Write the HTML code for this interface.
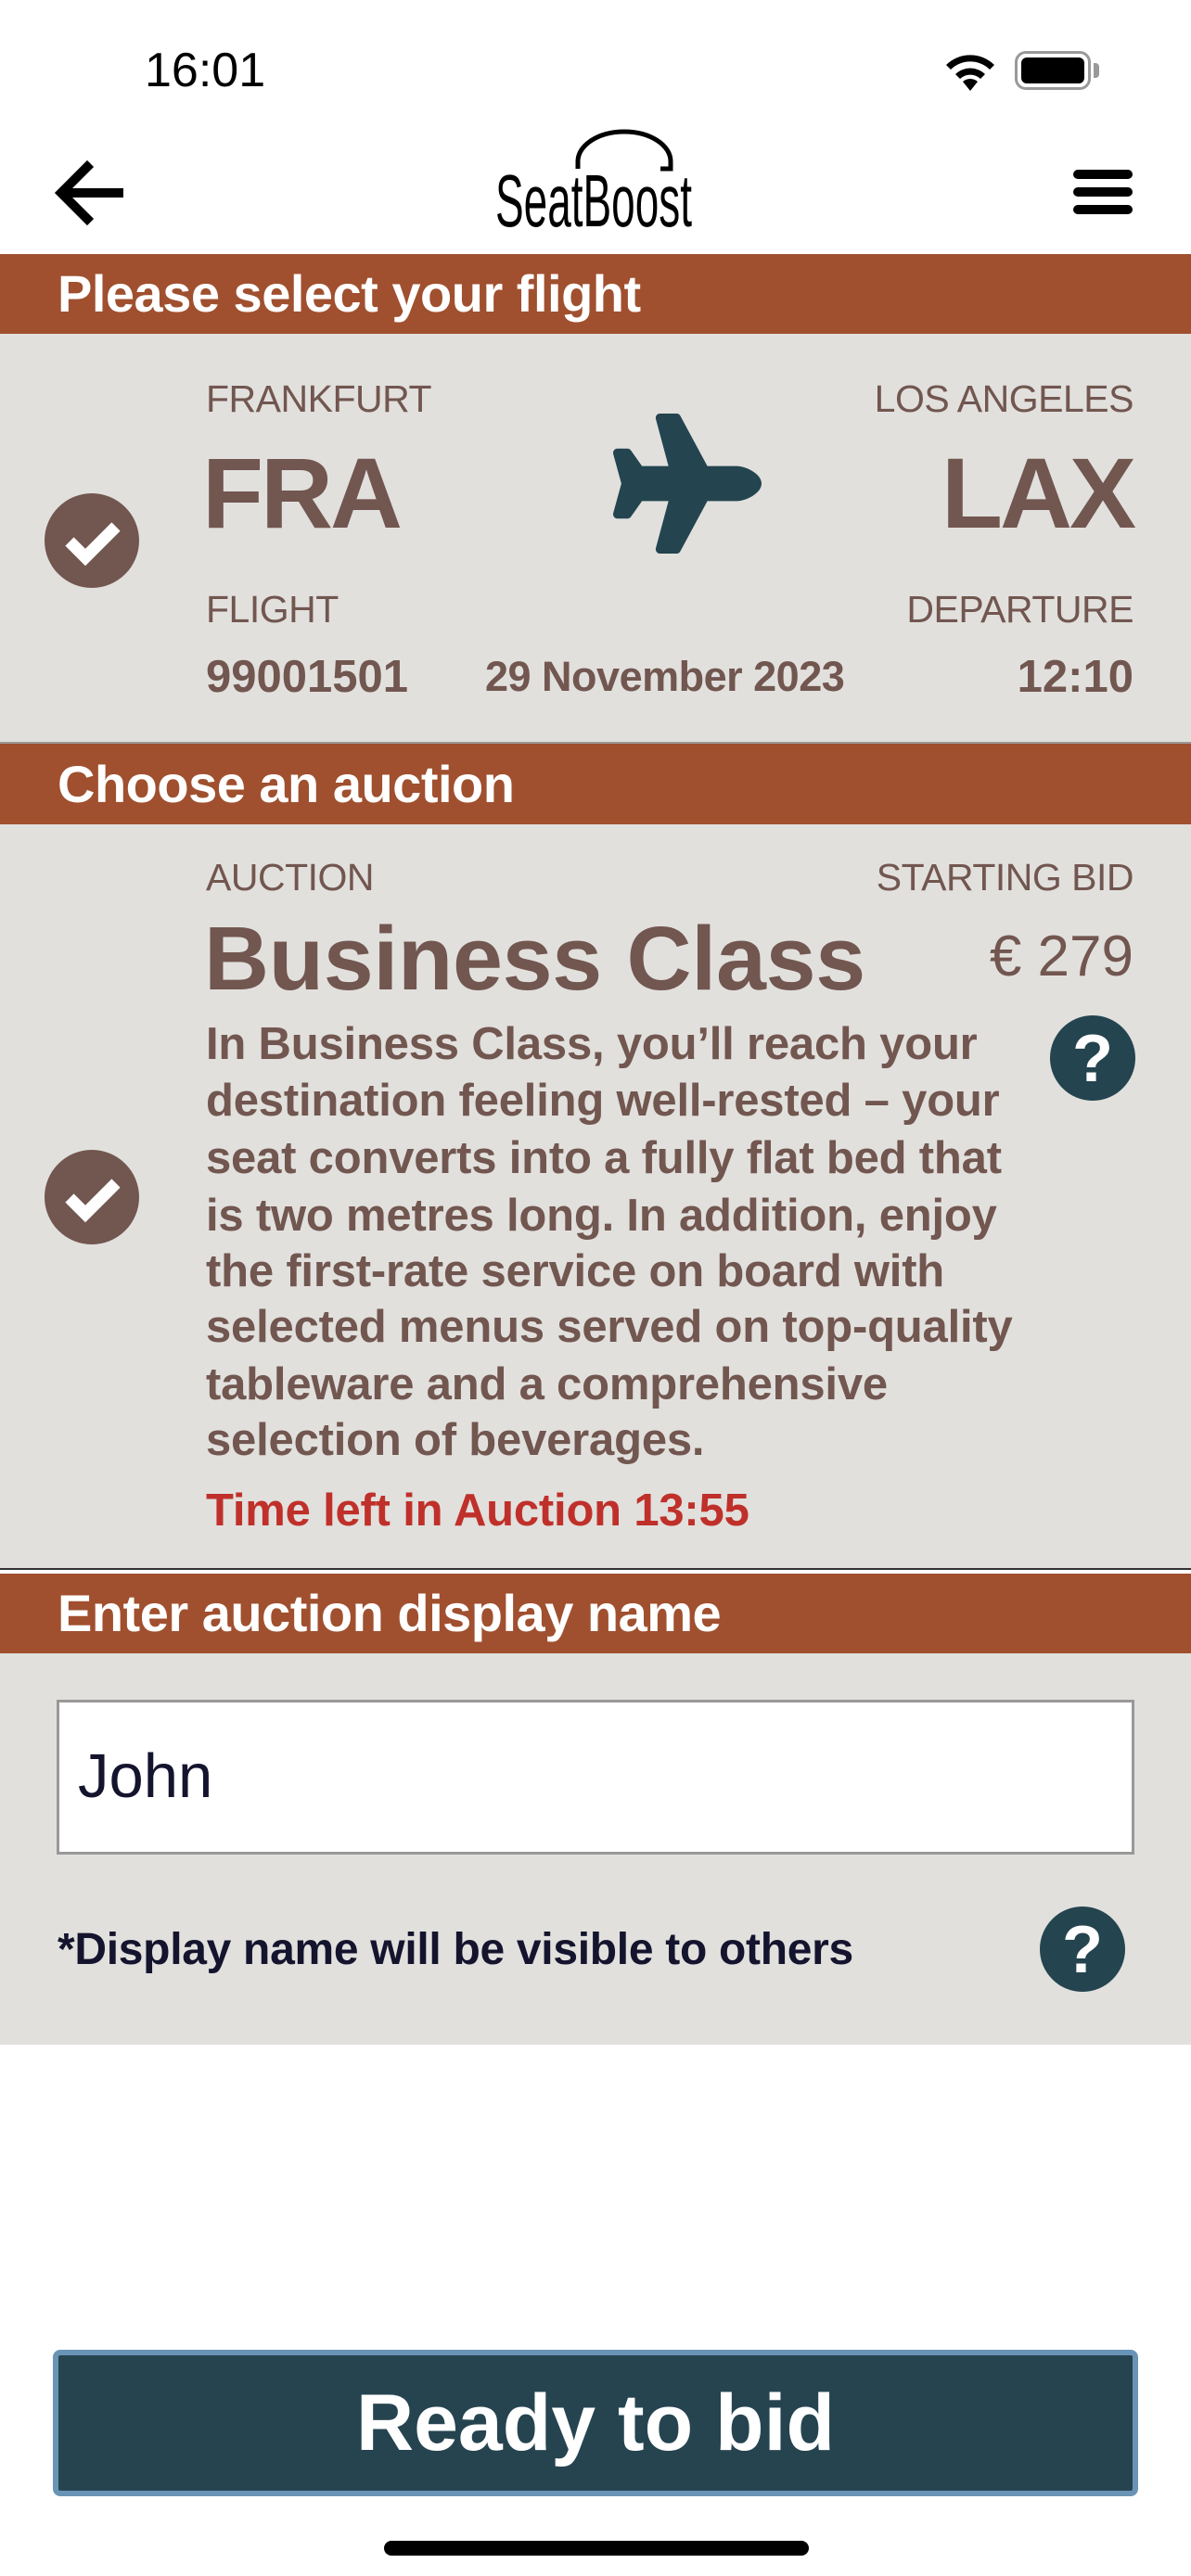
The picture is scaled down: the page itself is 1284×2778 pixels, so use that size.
<!DOCTYPE html>
<html><head><meta charset="utf-8">
<style>
*{margin:0;padding:0;box-sizing:border-box}
body{width:1284px;height:2778px;background:#fff;position:relative;overflow:hidden;font-family:"Liberation Sans",Arial,sans-serif}
.a{position:absolute;white-space:nowrap}
.bar{position:absolute;left:0;width:1284px;background:#A0502F;color:#fff;font-weight:bold;font-size:56px;padding-left:62px;letter-spacing:-0.5px}
.gray{position:absolute;left:0;width:1284px;background:#E1E0DD}
.lbl{font-size:41px;color:#725650;letter-spacing:-0.5px}
.br{color:#725650}
.p{position:absolute;left:222px;font-size:49px;font-weight:bold;color:#725650;line-height:61px;white-space:nowrap;letter-spacing:-0.2px}
</style></head><body>

<div class="a" style="left:156px;top:46px;font-size:52px;line-height:60px;color:#000;font-weight:500">16:01</div>
<svg class="a" style="left:1016px;top:54px" width="60" height="44" viewBox="0 0 60 44">
<path d="M30 44 L22 34 A12 12 0 0 1 38 34 Z" fill="#000"/>
<path d="M14 26 A23 23 0 0 1 46 26 L41 31 A16 16 0 0 0 19 31 Z" fill="#000"/>
<path d="M4 16 A37 37 0 0 1 56 16 L51 21 A30 30 0 0 0 9 21 Z" fill="#000"/>
</svg>
<div class="a" style="left:1094px;top:55px;width:82px;height:42px;border:3px solid #999;border-radius:12px"></div>
<div class="a" style="left:1101px;top:62px;width:68px;height:28px;background:#000;border-radius:6px"></div>
<div class="a" style="left:1179px;top:68px;width:6px;height:16px;background:#999;border-radius:0 4px 4px 0"></div>

<svg class="a" style="left:58px;top:172px" width="80" height="72" viewBox="0 0 80 72">
<path d="M70 36 H12 M36 8 L8 36 L36 64" stroke="#000" stroke-width="10" fill="none" stroke-linecap="square"/>
</svg>
<svg class="a" style="left:520px;top:138px" width="240" height="112" viewBox="0 0 240 112">
<path d="M103 44 V36 A50 32 0 0 1 203 36 V44 H192" stroke="#000" stroke-width="5" fill="none"/>
<text x="14" y="106" font-family="Liberation Sans Narrow, Liberation Sans, sans-serif" font-size="80" textLength="212" lengthAdjust="spacingAndGlyphs" fill="#000">SeatBoost</text>
</svg>
<div class="a" style="left:1157px;top:183px;width:64px;height:10px;background:#000;border-radius:5px"></div>
<div class="a" style="left:1157px;top:202px;width:64px;height:10px;background:#000;border-radius:5px"></div>
<div class="a" style="left:1157px;top:221px;width:64px;height:10px;background:#000;border-radius:5px"></div>

<div class="bar" style="top:274px;height:86px;line-height:86px">Please select your flight</div>
<div class="gray" style="top:360px;height:440px"></div>
<div class="a" style="left:0;top:800px;width:1284px;height:2px;background:#9a9a96"></div>

<div class="a lbl" style="left:222px;top:408px;line-height:44px">FRANKFURT</div>
<div class="a lbl" style="right:62px;top:408px;line-height:44px">LOS ANGELES</div>
<div class="a br" style="left:218px;top:472px;font-size:108px;font-weight:bold;line-height:120px;letter-spacing:-3px">FRA</div>
<div class="a br" style="right:62px;top:472px;font-size:108px;font-weight:bold;line-height:120px;letter-spacing:-3px">LAX</div>
<svg class="a" style="left:661px;top:446px" width="160" height="151" viewBox="0 0 576 512" preserveAspectRatio="none">
<path fill="#24444F" d="M480 192H365.71L260.61 8.06A16.014 16.014 0 0 0 246.71 0h-65.5c-10.630 0-18.300 10.170-15.380 20.390L214.86 192H112l-43.2-57.6c-3.02-4.03-7.77-6.4-12.8-6.4H16.01C5.6 128-2.04 137.78.49 147.880L32 256 .49 364.120C-2.04 374.22 5.6 384 16.01 384H56c5.040 0 9.780-2.370 12.8-6.4L112 320h102.86l-49.030 171.600c-2.920 10.220 4.750 20.400 15.380 20.400h65.5c5.740 0 11.040-3.080 13.890-8.060L365.71 320H480c35.350 0 96-28.650 96-64s-60.650-64-96-64z"/>
</svg>
<svg class="a" style="left:48px;top:532px" width="102" height="102" viewBox="0 0 102 102">
<circle cx="51" cy="51" r="51" fill="#725650"/>
<path d="M27 52 L44 69 L77 36" stroke="#fff" stroke-width="13" fill="none"/>
</svg>
<div class="a lbl" style="left:222px;top:635px;line-height:44px">FLIGHT</div>
<div class="a lbl" style="right:62px;top:635px;line-height:44px">DEPARTURE</div>
<div class="a br" style="left:222px;top:702px;font-size:49px;font-weight:bold;line-height:56px">99001501</div>
<div class="a br" style="left:523px;top:705px;font-size:45px;font-weight:bold;line-height:50px;letter-spacing:-0.5px">29 November 2023</div>
<div class="a br" style="right:62px;top:702px;font-size:49px;font-weight:bold;line-height:56px">12:10</div>

<div class="bar" style="top:802px;height:87px;line-height:87px">Choose an auction</div>
<div class="gray" style="top:889px;height:802px"></div>
<div class="a" style="left:0;top:1691px;width:1284px;height:2px;background:#333"></div>
<div class="gray" style="top:1693px;height:4px;background:#fff"></div>

<div class="a lbl" style="left:222px;top:924px;line-height:44px">AUCTION</div>
<div class="a lbl" style="right:62px;top:924px;line-height:44px">STARTING BID</div>
<div class="a br" style="left:220px;top:978px;font-size:97px;font-weight:bold;line-height:112px;letter-spacing:-0.3px">Business Class</div>
<div class="a br" style="right:62px;top:996px;font-size:62px;line-height:72px">€ 279</div>
<svg class="a" style="left:1132px;top:1095px" width="92" height="92" viewBox="0 0 92 92">
<circle cx="46" cy="46" r="46" fill="#24444F"/>
<text x="46" y="71" text-anchor="middle" font-family="Liberation Sans" font-weight="bold" font-size="72" fill="#fff">?</text>
</svg>
<div class="p" style="top:1096px">In Business Class, you’ll reach your</div>
<div class="p" style="top:1157px">destination feeling well-rested – your</div>
<div class="p" style="top:1219px">seat converts into a fully flat bed that</div>
<div class="p" style="top:1281px">is two metres long. In addition, enjoy</div>
<div class="p" style="top:1341px">the first-rate service on board with</div>
<div class="p" style="top:1401px">selected menus served on top-quality</div>
<div class="p" style="top:1463px">tableware and a comprehensive</div>
<div class="p" style="top:1523px">selection of beverages.</div>
<div class="p" style="top:1599px;color:#C0302A">Time left in Auction 13:55</div>
<svg class="a" style="left:48px;top:1240px" width="102" height="102" viewBox="0 0 102 102">
<circle cx="51" cy="51" r="51" fill="#725650"/>
<path d="M27 52 L44 69 L77 36" stroke="#fff" stroke-width="13" fill="none"/>
</svg>

<div class="bar" style="top:1697px;height:86px;line-height:86px">Enter auction display name</div>
<div class="gray" style="top:1783px;height:422px"></div>
<div class="a" style="left:61px;top:1833px;width:1162px;height:167px;background:#fff;border:3px solid #999"></div>
<div class="a" style="left:84px;top:1878px;font-size:67px;line-height:76px;color:#14142e">John</div>
<div class="a" style="left:62px;top:2075px;font-size:48px;font-weight:bold;line-height:56px;color:#14142e;letter-spacing:-0.3px">*Display name will be visible to others</div>
<svg class="a" style="left:1121px;top:2056px" width="92" height="92" viewBox="0 0 92 92">
<circle cx="46" cy="46" r="46" fill="#24444F"/>
<text x="46" y="71" text-anchor="middle" font-family="Liberation Sans" font-weight="bold" font-size="72" fill="#fff">?</text>
</svg>

<div class="a" style="left:57px;top:2534px;width:1170px;height:158px;background:#264450;border:6px solid #6a94b6;border-radius:8px;color:#fff;font-size:86px;font-weight:bold;text-align:center;line-height:146px">Ready to bid</div>
<div class="a" style="left:414px;top:2740px;width:458px;height:16px;background:#000;border-radius:8px"></div>
</body></html>
